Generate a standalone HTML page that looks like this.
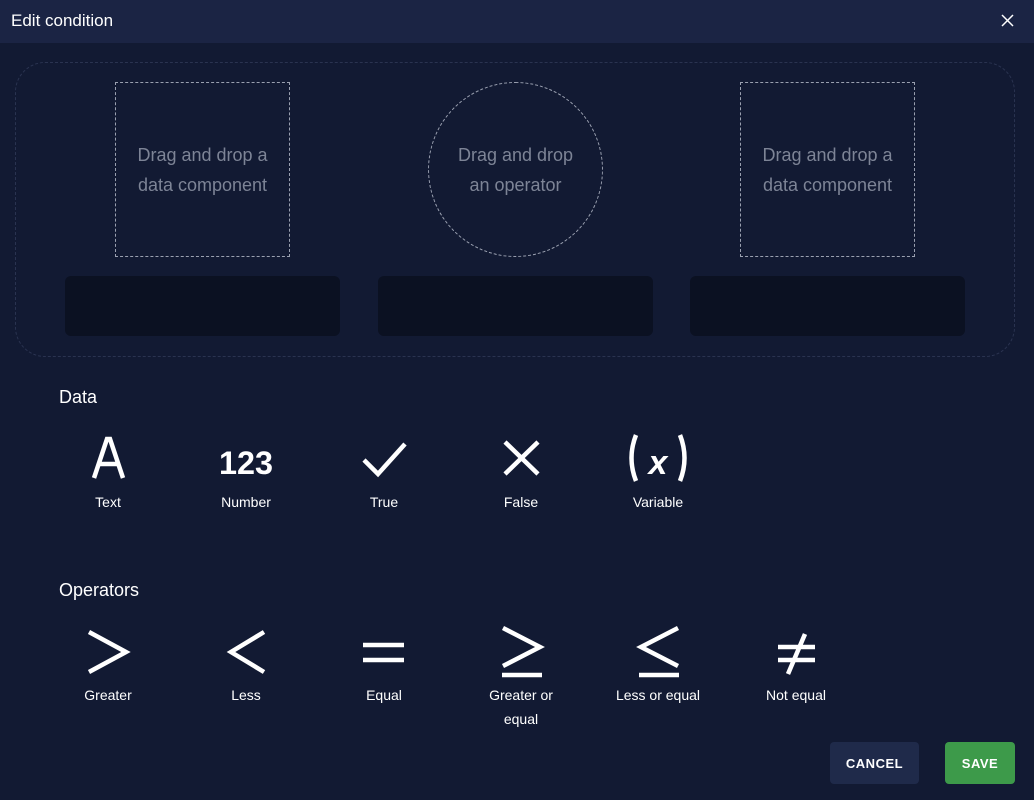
<!DOCTYPE html>
<html><head><style>
body{margin:0;width:1034px;height:800px;background:#121a33;font-family:"Liberation Sans",sans-serif;overflow:hidden;position:relative;color:#fff}
.hdr{position:absolute;left:0;top:0;width:1034px;height:43px;background:#1b2444}
.hdr span{position:absolute;left:11px;top:11px;font-size:17px}
.outer{position:absolute;left:15px;top:62px;width:998px;height:293px;border:1px dashed #2a3350;border-radius:30px}
.drop{position:absolute;top:82px;width:173px;height:173px;border:1px dashed #9aa0b0;color:#7d8496;font-size:18px;line-height:30px;text-align:center;display:flex;align-items:center;justify-content:center}
.bar{position:absolute;top:276px;width:275px;height:60px;background:#0b1122;border-radius:6px}
.h{position:absolute;left:59px;font-size:18px}
.it{position:absolute;width:130px;text-align:center;font-size:14px;line-height:24px}
svg{position:absolute}
.btn{position:absolute;top:742px;height:42px;border-radius:4px;font-size:13px;font-weight:bold;letter-spacing:.5px;display:flex;align-items:center;justify-content:center}
</style></head><body>
<div class="hdr"><span>Edit condition</span>
<svg style="left:1001px;top:14px" width="13" height="13"><path d="M1 1L12 12M12 1L1 12" stroke="#fff" stroke-width="1.5"/></svg></div>
<div class="outer"></div>
<div class="drop" style="left:115px">Drag and drop a<br>data component</div>
<div class="drop" style="left:428px;border-radius:50%">Drag and drop<br>an operator</div>
<div class="drop" style="left:740px">Drag and drop a<br>data component</div>
<div class="bar" style="left:65px"></div><div class="bar" style="left:378px"></div><div class="bar" style="left:690px"></div>
<div class="h" style="top:387px">Data</div>
<svg style="left:0;top:430px" width="800" height="60" fill="none" stroke="#fff" stroke-width="4.5">
<path d="M94 48L107 9L110 9L123 48M98 34H119"/>
<text x="246" y="44" font-size="32" font-weight="bold" fill="#fff" stroke="none" text-anchor="middle" textLength="54" lengthAdjust="spacingAndGlyphs">123</text>
<path d="M364 30L378 44L405 14"/>
<path d="M505 12L538 44M538 12L505 44"/>
<path d="M636 5Q627 28 636 51M680 5Q689 28 680 51"/>
<text x="658" y="44" font-size="34" font-weight="bold" font-style="italic" fill="#fff" stroke="none" text-anchor="middle">x</text>
</svg>
<div class="it" style="left:43px;top:490px">Text</div>
<div class="it" style="left:181px;top:490px">Number</div>
<div class="it" style="left:319px;top:490px">True</div>
<div class="it" style="left:456px;top:490px">False</div>
<div class="it" style="left:593px;top:490px">Variable</div>
<div class="h" style="top:580px">Operators</div>
<svg style="left:0;top:620px" width="900" height="60" fill="none" stroke="#fff" stroke-width="4.5">
<path d="M89 12L126 32L89 52"/>
<path d="M264 12L231 32L264 52"/>
<path d="M363 25H404M363 40H404"/>
<path d="M503 8L540 27L503 46M502 55H542"/>
<path d="M678 8L641 27L678 46M639 55H679"/>
<path d="M778 27H815M778 40H815M805 14L788 54"/>
</svg>
<div class="it" style="left:43px;top:683px">Greater</div>
<div class="it" style="left:181px;top:683px">Less</div>
<div class="it" style="left:319px;top:683px">Equal</div>
<div class="it" style="left:456px;top:683px">Greater or<br>equal</div>
<div class="it" style="left:593px;top:683px">Less or equal</div>
<div class="it" style="left:731px;top:683px">Not equal</div>
<div class="btn" style="left:830px;width:89px;background:#1f2a4a">CANCEL</div>
<div class="btn" style="left:945px;width:70px;background:#3d9a4a">SAVE</div>
</body></html>
